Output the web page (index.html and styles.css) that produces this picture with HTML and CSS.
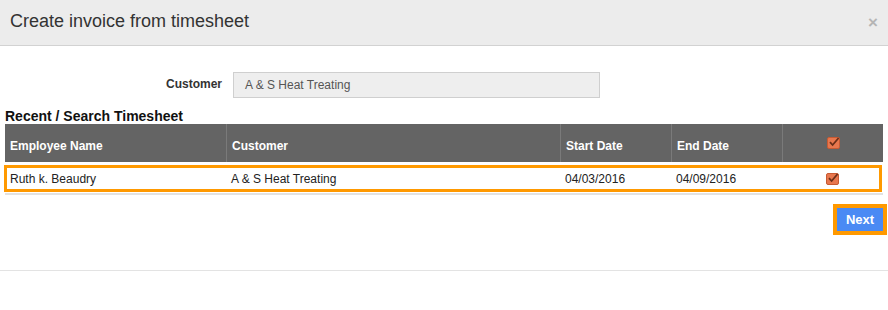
FILE: index.html
```html
<!DOCTYPE html>
<html lang="en">
<head>
  <meta charset="UTF-8">
  <title>Create invoice from timesheet</title>
  <link rel="stylesheet" href="styles.css">
</head>
<body>
  <div class="modal">
    <!-- Header -->
    <div class="modal-header">
      <h4 class="modal-title">Create invoice from timesheet</h4>
      <button class="close-btn" type="button">&times;</button>
    </div>

    <div class="modal-body">
      <div class="form-row">
        <label class="form-label">Customer</label>
        <div class="form-input">A &amp; S Heat Treating</div>
      </div>

      <h5 class="section-title">Recent / Search Timesheet</h5>
      <div class="ts-table">
        <div class="ts-row ts-head">
          <div class="ts-cell">Employee Name</div>
          <div class="ts-cell">Customer</div>
          <div class="ts-cell">Start Date</div>
          <div class="ts-cell">End Date</div>
          <div class="ts-cell ts-check"><span class="checkbox"><svg viewBox="0 0 13 13"><path d="M3 6.2 L5.6 9 L11.6 2" /></svg></span></div>
        </div>
        <div class="ts-row ts-item selected">
          <div class="ts-cell">Ruth k. Beaudry</div>
          <div class="ts-cell">A &amp; S Heat Treating</div>
          <div class="ts-cell">04/03/2016</div>
          <div class="ts-cell">04/09/2016</div>
          <div class="ts-cell ts-check"><span class="checkbox"><svg viewBox="0 0 13 13"><path d="M3 6.2 L5.6 9 L11.6 2" /></svg></span></div>
        </div>
      </div>

      <div class="actions">
        <button class="btn-next" type="button">Next</button>
      </div>
    </div>

    <div class="modal-footer"></div>
  </div>
</body>
</html>
```

FILE: styles.css
```css
html, body {
  margin: 0;
  padding: 0;
  background: #fff;
  font-family: 'Liberation Sans', Arial, sans-serif;
  color: #222;
}
/* Header */
.modal-header {
  height: 45px;
  background: #ececec;
  border-bottom: 1px solid #d2d2d2;
  display: flex;
  align-items: center;
  justify-content: space-between;
  padding: 0 10px 0 10px;
}
.modal-title {
  margin: 0;
  font-size: 18px;
  font-weight: normal;
  color: #333;
  padding-bottom: 2px;
}
.close-btn {
  background: none;
  border: none;
  color: #b5b5b5;
  font-size: 17px;
  font-weight: bold;
  padding: 0;
  cursor: pointer;
  font-family: 'Liberation Sans', Arial, sans-serif;
}
/* Customer field */
.modal-body {
  padding: 26px 0 0 0;
}
.form-row {
  display: flex;
  align-items: center;
}
.form-label {
  width: 222px;
  text-align: right;
  font-size: 12px;
  font-weight: bold;
  color: #333;
  padding-bottom: 2px;
}
.form-input {
  margin-left: 11px;
  width: 354px;
  height: 24px;
  line-height: 25px;
  padding-left: 11px;
  background: #eee;
  border: 1px solid #cfcfcf;
  font-size: 12px;
  color: #555;
}
/* Table */
.section-title {
  margin: 11px 0 0 5px;
  font-size: 14px;
  font-weight: bold;
  color: #111;
  line-height: 15px;
}
.ts-table {
  margin: 0 5px;
  border-bottom: 2px solid #e2e2e2;
  padding-bottom: 1px;
}
.ts-row {
  display: grid;
  grid-template-columns: 221px 334px 111px 111px 1fr;
  font-size: 12px;
}
.ts-head {
  background: #646464;
  color: #fff;
  font-weight: bold;
  height: 38px;
}
.ts-head .ts-cell {
  border-left: 1px solid #7a7a7a;
  padding-top: 15px;
}
.ts-head .ts-cell:first-child {
  border-left: none;
}
.ts-cell {
  padding-left: 5px;
}
.ts-head .ts-check {
  padding-top: 13px;
}
.ts-item {
  margin: 3px 1px 0 -1px;
  border: 3px solid #ff9900;
  height: 21px;
  line-height: 22px;
  color: #222;
  grid-template-columns: 219px 334px 111px 111px 1fr;
}
.ts-item .ts-cell:first-child {
  padding-left: 3px;
}
.ts-check {
  display: flex;
  justify-content: center;
  padding-left: 0;
}
.ts-item .ts-check {
  align-items: center;
  padding-left: 3px;
}
.checkbox {
  display: inline-block;
  width: 13px;
  height: 12px;
  background: #e8774e;
  border: 1px solid #c85a32;
  border-radius: 2px;
  box-sizing: border-box;
}
.checkbox svg {
  display: block;
  width: 13px;
  height: 13px;
  margin: -2px 0 0 -1px;
  overflow: visible;
}
.checkbox path {
  fill: none;
  stroke: #6b2e18;
  stroke-width: 1.8;
}
/* Next */
.actions {
  display: flex;
  justify-content: flex-end;
  padding: 9px 1px 0 0;
}
.btn-next {
  background: #4a8af4;
  color: #fff;
  font-weight: bold;
  font-size: 13px;
  font-family: 'Liberation Sans', Arial, sans-serif;
  border: 4px solid #ff9900;
  width: 54px;
  height: 31px;
  padding: 0;
  cursor: pointer;
}
.modal-footer {
  margin-top: 35px;
  border-top: 1px solid #e3e3e3;
}
```
